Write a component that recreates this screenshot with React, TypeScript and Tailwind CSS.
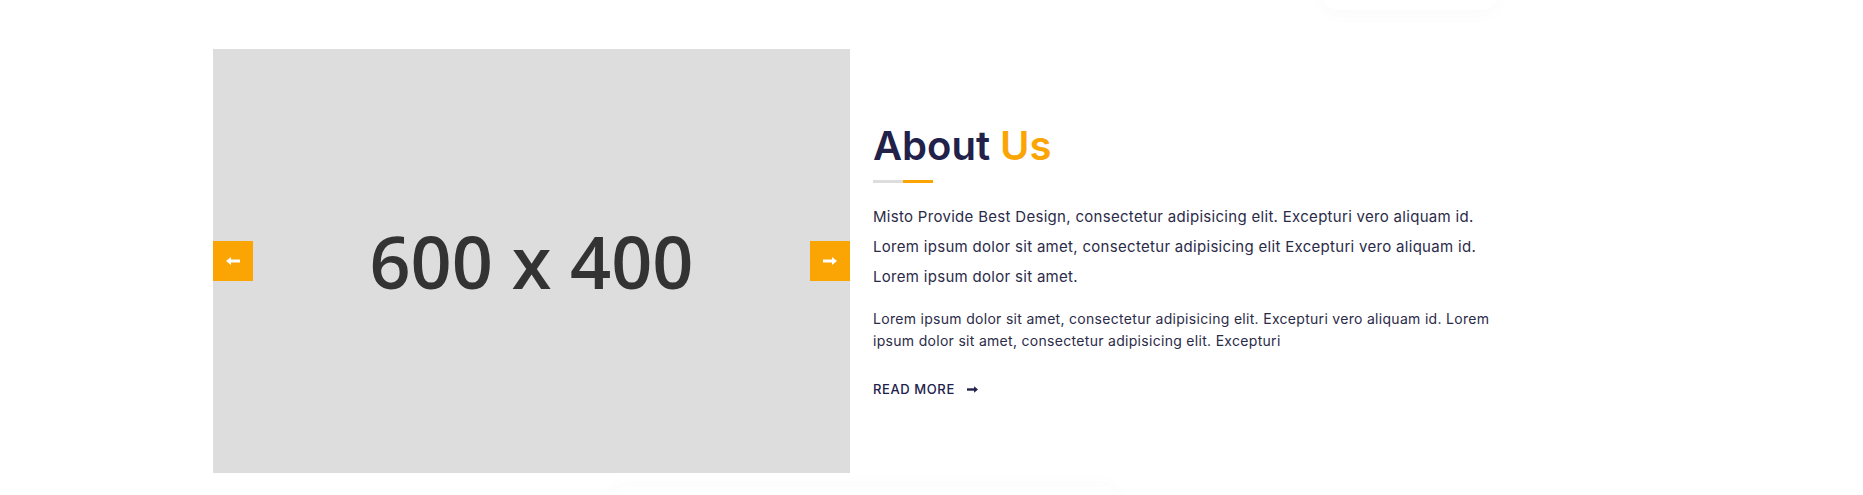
import React from "react"

const navy = "text-[#21214a]"

function ArrowLeft() {
  return (
    <svg width="14" height="8" viewBox="0 0 14 8" fill="white">
      <rect x="4" y="2.5" width="10" height="3" />
      <path d="M0 4 L5 0 L5 8 Z" />
    </svg>
  )
}

function ArrowRight({ color = "white", w = 14, h = 8 }: { color?: string; w?: number; h?: number }) {
  return (
    <svg width={w} height={h} viewBox="0 0 14 8" fill={color}>
      <rect x="0" y="2.5" width="10" height="3" />
      <path d="M14 4 L9 0 L9 8 Z" />
    </svg>
  )
}

export default function App() {
  return (
    <div className="w-full h-[495px] overflow-hidden bg-white font-['Inter','Liberation_Sans',sans-serif]">
      {/* edge of the card above */}
      <div className="h-0 flex">
        <div className="ml-[1320px] w-[180px] h-[40px] -mt-[30px] rounded-full bg-white shadow-[0_6px_18px_rgba(0,0,0,0.02)]" />
      </div>

      <section className="pt-[49px] flex items-start">
        <div className="ml-[213px] w-[637px] h-[424px] bg-[#dddddd] flex items-center justify-between shrink-0">
          <button className="w-10 h-10 bg-[#fba504] flex items-center justify-center">
            <ArrowLeft />
          </button>
          <span className="font-['Open_Sans',sans-serif] text-[72px] leading-none font-semibold text-[#333333]">
            600 x 400
          </span>
          <button className="w-10 h-10 bg-[#fba504] flex items-center justify-center">
            <ArrowRight />
          </button>
        </div>

        <div className="w-[660px] pl-[23px] pt-[73px] shrink-0">
          <h2 className={`text-[40px] leading-[48px] font-semibold ${navy}`}>
            About <span className="text-[#fba504]">Us</span>
          </h2>
          <div className="mt-[10px] flex h-[3px] w-[60px]">
            <div className="w-[30px] bg-[#dddddd]" />
            <div className="w-[30px] bg-[#fba504]" />
          </div>
          <div className="mt-[19px] text-[15px] leading-[30px] tracking-[0.3px] text-[#2b2b48]">
            <p>Misto Provide Best Design, consectetur adipisicing elit. Excepturi vero aliquam id.</p>
            <p>Lorem ipsum dolor sit amet, consectetur adipisicing elit Excepturi vero aliquam id.</p>
            <p>Lorem ipsum dolor sit amet.</p>
          </div>
          <p className="mt-[16px] w-[640px] text-[14px] leading-[22px] tracking-[0.3px] text-[#2b2b48]">
            Lorem ipsum dolor sit amet, consectetur adipisicing elit. Excepturi vero aliquam id. Lorem ipsum dolor sit amet, consectetur adipisicing elit. Excepturi
          </p>
          <a href="#" className={`mt-[27px] flex items-center gap-[12px] text-[13px] leading-[20px] font-medium uppercase tracking-[0.6px] ${navy}`}>
            Read More
            <ArrowRight color="#21214a" w={11} h={7} />
          </a>
        </div>
      </section>

      {/* shadow of the block below */}
      <div className="flex">
        <div className="ml-[610px] w-[510px] h-[30px] mt-[14px] rounded-full bg-white shadow-[0_-6px_16px_rgba(0,0,0,0.015)]" />
      </div>
    </div>
  )
}
